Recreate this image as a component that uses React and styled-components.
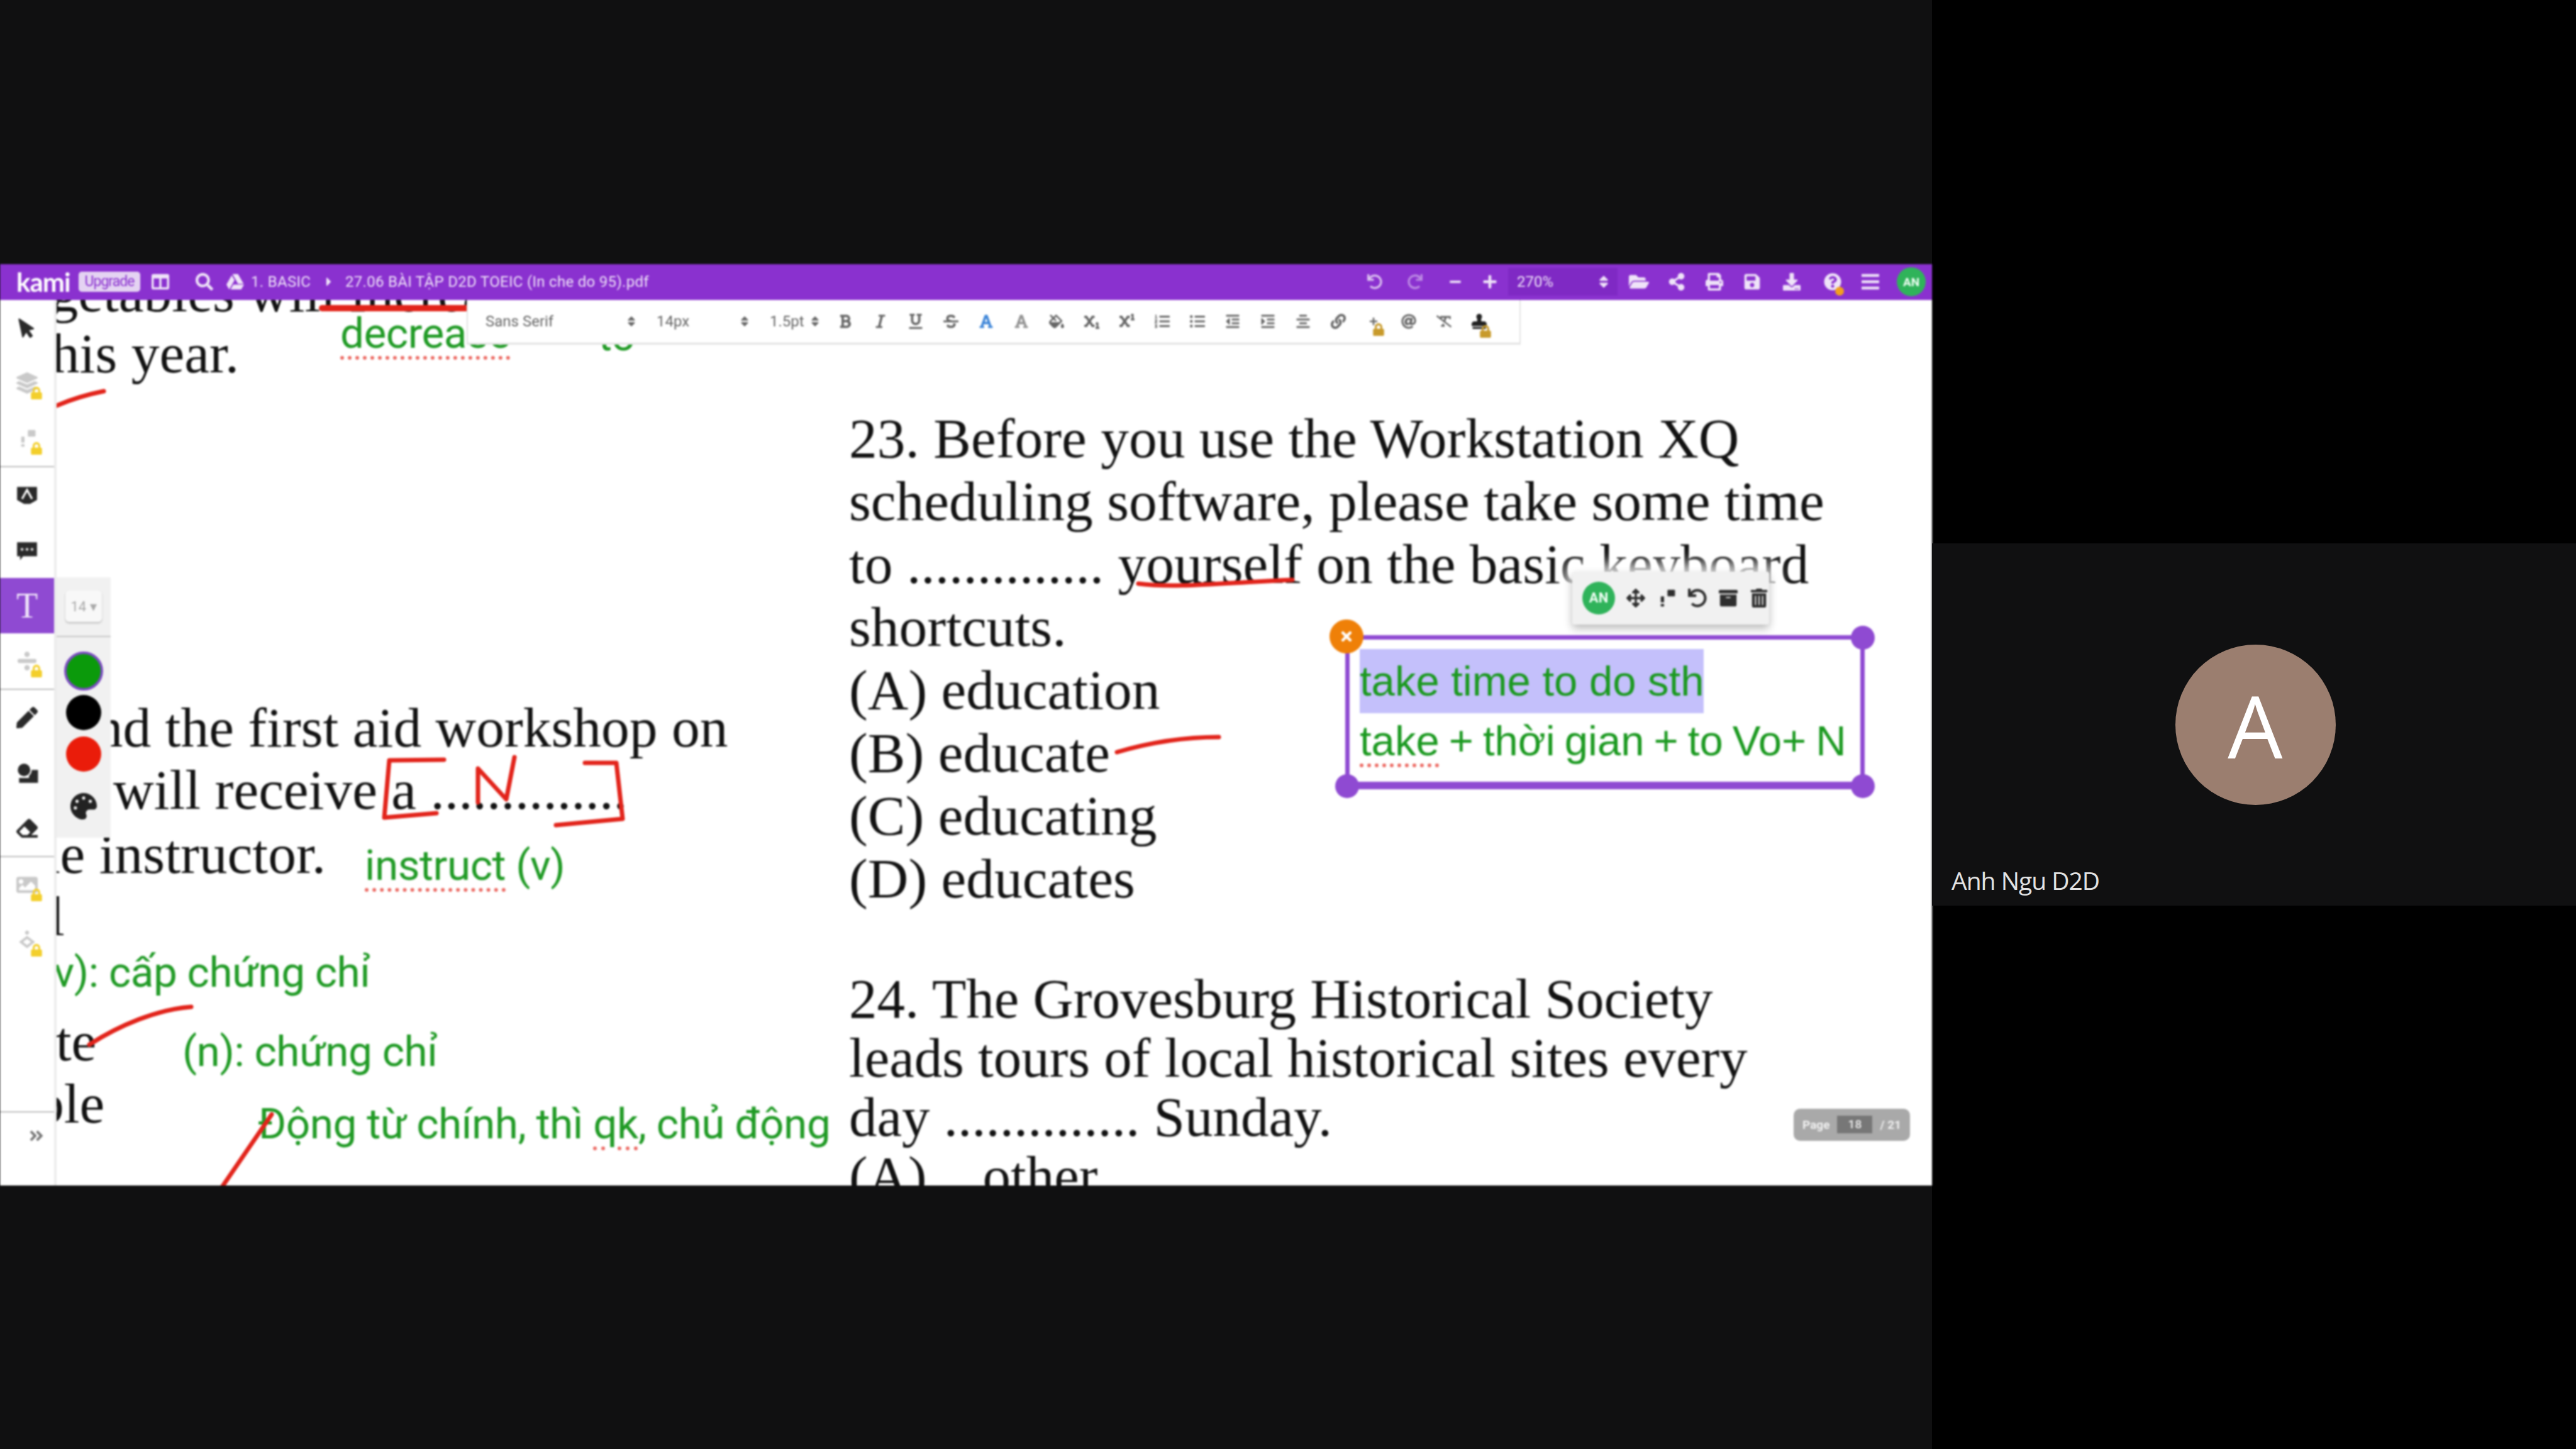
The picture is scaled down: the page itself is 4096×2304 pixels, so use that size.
import React from "react";
import styled, { createGlobalStyle } from "styled-components";
import {
  FaAlignCenter, FaAngleDoubleRight, FaArchive, FaArrowsAlt, FaAt, FaBars, FaBold, FaCaretRight,
  FaDownload, FaEraser, FaFillDrip, FaFolderOpen, FaFont,
  FaGoogleDrive, FaImage, FaIndent, FaItalic, FaLayerGroup, FaLink, FaListOl, FaListUl, FaLock, FaMousePointer,
  FaMinus, FaOutdent, FaPalette, FaPen, FaPlus, FaPrint, FaQuestionCircle, FaRedo, FaRemoveFormat, FaSave,
  FaSearch, FaShareAlt, FaSort, FaStamp, FaStrikethrough, FaSubscript, FaSuperscript,
  FaTimes, FaTrashAlt, FaUnderline, FaUndo, FaColumns, FaDivide,
} from "react-icons/fa";

const Global = createGlobalStyle`
  html, body { margin: 0; background: #000; overflow: hidden; }
`;

const Stage = styled.div`
  display: flex;
  width: 4096px;
  height: 2304px;
  background: #000;
`;

const MainColumn = styled.div`
  width: 3072px;
  display: flex;
  flex-direction: column;
  justify-content: center;
  background: #101011;
`;

const SideColumn = styled.div`
  width: 1024px;
  display: flex;
  flex-direction: column;
  justify-content: center;
`;

const Tile = styled.div`
  position: relative;
  height: 576px;
  padding-left: 4px;
  display: flex;
  align-items: center;
  justify-content: center;
  background: #101011;
`;

const BigAvatar = styled.div`
  width: 255px;
  height: 255px;
  border-radius: 50%;
  background: #9b7e6f;
  color: #fff;
  display: flex;
  align-items: center;
  justify-content: center;
  font: 400 138px "Open Sans", sans-serif;
`;

const TileName = styled.div`
  position: absolute;
  left: 31px;
  bottom: 14px;
  color: #e2e2e2;
  font: 400 39px "Open Sans", sans-serif;
  letter-spacing: -1px;
`;

const Screen = styled.div`
  height: 1465px;
  display: flex;
  flex-direction: column;
  background: #fff;
  filter: blur(1.4px);
`;

const TopBar = styled.div`
  height: 57px;
  flex: none;
  display: flex;
  align-items: center;
  padding: 0 10px 0 26px;
  background: #8a31cf;
  color: #efe4f8;
  font: 400 24px "Roboto", sans-serif;
`;

const Logo = styled.span`
  width: 99px;
  color: #fff;
  font: 700 42px "Lato", sans-serif;
  letter-spacing: -1px;
`;

const Upgrade = styled.span`
  width: 98px;
  height: 32px;
  border-radius: 5px;
  background: #e4d3f2;
  color: #8a31cf;
  font-size: 23px;
  line-height: 32px;
  text-align: center;
  letter-spacing: -1px;
`;

const BarIcon = styled.span`
  width: ${(p) => p.$w || 60}px;
  flex: none;
  display: flex;
  align-items: center;
  justify-content: center;
  position: relative;
  font-size: ${(p) => p.$size || 28}px;
  opacity: ${(p) => p.$dim || 1};
`;

const Crumb = styled.span`
  flex: none;
  width: ${(p) => p.$w}px;
  white-space: nowrap;
  letter-spacing: 0.3px;
`;

const BarSpacer = styled.div`
  flex: 1;
`;

const ZoomField = styled.span`
  width: 174px;
  height: 44px;
  margin: 0 4px;
  padding: 0 10px 0 14px;
  box-sizing: border-box;
  display: flex;
  align-items: center;
  justify-content: space-between;
  background: #7f29c4;
`;

const HelpDot = styled.i`
  position: absolute;
  right: 14px;
  bottom: -8px;
  width: 14px;
  height: 14px;
  border-radius: 50%;
  background: #f2a01e;
`;

const SmallAvatar = styled.span`
  width: ${(p) => p.$d}px;
  height: ${(p) => p.$d}px;
  flex: none;
  border-radius: 50%;
  display: flex;
  align-items: center;
  justify-content: center;
  background: #2fb35a;
  color: #f2fff6;
  font: 700 ${(p) => p.$font}px "Roboto", sans-serif;
`;

const Body = styled.div`
  flex: 1;
  display: flex;
  min-height: 0;
`;

const ToolRail = styled.div`
  width: 90px;
  flex: none;
  box-sizing: border-box;
  display: flex;
  flex-direction: column;
  background: #fff;
  border-right: 4px solid #ececec;
`;

const ToolSection = styled.div`
  display: flex;
  flex-direction: column;
  border-bottom: ${(p) => (p.$plain ? "none" : "2px solid #bdbdbd")};
`;

const ToolButton = styled.div`
  position: relative;
  height: 88px;
  display: flex;
  align-items: center;
  justify-content: center;
  background: ${(p) => (p.$active ? "#8f4ad2" : "transparent")};
  color: ${(p) => (p.$active ? "#f0e6f9" : p.$locked ? "#c9c9c9" : "#2a2a2a")};
  font-size: 34px;
`;

const ActiveGlyph = styled.span`
  font: 400 56px "Liberation Serif", serif;
`;

const RailFoot = styled.div`
  margin-top: auto;
  height: 118px;
  box-sizing: border-box;
  display: flex;
  align-items: flex-start;
  justify-content: flex-end;
  padding: 24px 15px 0 0;
  border-top: 2px solid #bdbdbd;
  color: #777;
  font-size: 26px;
`;

const LockBadge = styled.span`
  position: absolute;
  right: ${(p) => p.$r ?? 18}px;
  bottom: ${(p) => p.$b ?? 18}px;
  color: ${(p) => p.$color || "#f3cf2b"};
  font-size: ${(p) => p.$size || 20}px;
  display: flex;
`;

const ColorPanel = styled.div`
  position: absolute;
  left: 0;
  top: 441px;
  width: 86px;
  height: 414px;
  z-index: 3;
  display: flex;
  flex-direction: column;
  align-items: center;
  background: #f1f1f1;
`;

const SizeChip = styled.div`
  height: 95px;
  width: 100%;
  flex: none;
  display: flex;
  align-items: center;
  justify-content: center;
  border-bottom: 2px solid #c6c6c6;
  box-sizing: border-box;
  color: #a8a8a8;
  font: 400 22px "Roboto", sans-serif;
  & > span {
    width: 58px;
    height: 50px;
    border-radius: 6px;
    background: #f8f8f8;
    box-shadow: 0 2px 3px #bbb;
    display: flex;
    align-items: center;
    justify-content: center;
  }
`;

const Swatch = styled.div`
  width: ${(p) => (p.$selected ? 62 : 56)}px;
  height: ${(p) => (p.$selected ? 62 : 56)}px;
  box-sizing: border-box;
  margin-top: ${(p) => p.$top}px;
  border-radius: 50%;
  background: ${(p) => p.$color};
  border: ${(p) => (p.$selected ? "4px solid #7a4bc0" : "none")};
`;

const PaletteIcon = styled.div`
  margin-top: 34px;
  color: #222;
  font-size: 42px;
  display: flex;
`;

const Doc = styled.div`
  position: relative;
  flex: 1;
  overflow: hidden;
  background: #fff;
`;

const PageLine = styled.div`
  position: absolute;
  left: ${(p) => p.$x}px;
  top: ${(p) => p.$y}px;
  color: #111;
  font: 400 89.5px/100px "Liberation Serif", serif;
  white-space: pre;
`;

const Question = styled.div`
  position: absolute;
  left: ${(p) => p.$x}px;
  top: ${(p) => p.$y}px;
  color: #111;
  font: 400 ${(p) => p.$size}px/${(p) => p.$leading}px "Liberation Serif", serif;
  white-space: pre;
`;

const Note = styled.div`
  position: absolute;
  left: ${(p) => p.$x}px;
  top: ${(p) => p.$y}px;
  color: #1f9a24;
  font: 400 67.5px/84px "Roboto", sans-serif;
  white-space: pre;
  letter-spacing: -0.5px;
`;

const Misspelled = styled.span`
  text-decoration: underline dotted #ec6a63 6px;
  text-underline-offset: 14px;
`;

const Ink = styled.svg`
  position: absolute;
  left: 0;
  top: 0;
  z-index: 1;
  & path {
    fill: none;
    stroke: #e2231a;
    stroke-width: 7;
    stroke-linecap: round;
    stroke-linejoin: round;
  }
`;

const FormatBar = styled.div`
  position: absolute;
  left: 652px;
  top: 0;
  height: 71px;
  width: 1676px;
  z-index: 4;
  box-sizing: border-box;
  display: flex;
  align-items: center;
  background: #fff;
  border: solid #e2e2e2;
  border-width: 0 2px 3px 2px;
  color: #666;
  font: 400 24px "Roboto", sans-serif;
`;

const FormatSelect = styled.div`
  width: ${(p) => p.$w}px;
  flex: none;
  box-sizing: border-box;
  padding: 0 ${(p) => p.$pr}px 0 ${(p) => p.$pl}px;
  display: flex;
  align-items: center;
  justify-content: space-between;
  & svg {
    font-size: 20px;
  }
`;

const FormatButton = styled.div`
  position: relative;
  width: 56px;
  flex: none;
  display: flex;
  align-items: center;
  justify-content: center;
  color: ${(p) => p.$color || "#666"};
  font-size: ${(p) => p.$size || 24}px;
`;

const BoxTools = styled.div`
  position: absolute;
  left: 2410px;
  top: 432px;
  width: 313px;
  height: 84px;
  z-index: 2;
  display: flex;
  align-items: center;
  padding-left: 16px;
  box-sizing: border-box;
  background: #f1f1f1;
  border-radius: 4px;
  box-shadow: 0 6px 14px rgba(0, 0, 0, 0.28), 0 0 24px 12px rgba(255, 255, 255, 0.9);
  color: #2e2e2e;
  font-size: 30px;
  & > svg {
    margin-left: 17px;
    width: 32px;
  }
`;

const TextBox = styled.div`
  position: absolute;
  left: 2049px;
  top: 533px;
  width: 826px;
  height: 245px;
  z-index: 2;
  box-sizing: border-box;
  padding: 15px 0 0 16px;
  border: 7px solid #8f4ad2;
  border-bottom-width: 12px;
  color: #1a991f;
  font: 400 67px/102px "Liberation Sans", sans-serif;
  white-space: pre;
`;

const BoxLine = styled.div`
  height: ${(p) => p.$h}px;
  word-spacing: ${(p) => p.$tight || 0}px;
  & > span {
    display: inline-block;
    background: ${(p) => (p.$selected ? "#c4c0fb" : "transparent")};
  }
`;

const Handle = styled.i`
  position: absolute;
  width: 38px;
  height: 38px;
  border-radius: 50%;
  background: #8f4ad2;
  ${(p) => (p.$right ? "right: -23px;" : "left: -23px;")}
  ${(p) => (p.$bottom ? "bottom: -26px;" : "top: -22px;")}
`;

const CloseHandle = styled.div`
  position: absolute;
  left: -32px;
  top: -32px;
  width: 54px;
  height: 54px;
  border-radius: 50%;
  background: #ef8008;
  color: #fff;
  display: flex;
  align-items: center;
  justify-content: center;
  font-size: 24px;
`;

const PageBadge = styled.div`
  position: absolute;
  left: 2762px;
  top: 1286px;
  width: 185px;
  height: 51px;
  z-index: 2;
  box-sizing: border-box;
  padding: 0 14px;
  border-radius: 10px;
  background: #a9a9a9;
  color: #f1f1f1;
  display: flex;
  align-items: center;
  justify-content: space-between;
  font: 700 19px "Roboto", sans-serif;
  & > b {
    width: 56px;
    height: 28px;
    background: #777;
    font-weight: 500;
    text-align: center;
    line-height: 28px;
  }
`;

const locked = { $locked: true };

// the small icons below are not in the icon set
const AnchorIcon = () => (
  <svg width="32" height="32" viewBox="0 0 24 24" fill="currentColor">
    <rect x="13" y="2" width="9" height="8" rx="1" />
    <rect x="5" y="10" width="4" height="7" />
    <rect x="5" y="19" width="4" height="3" />
  </svg>
);

const HighlightIcon = () => (
  <svg width="38" height="38" viewBox="0 0 24 24">
    <path d="M2 4 H22 V17 L15 21 H9 L2 17 Z" fill="currentColor" />
    <path d="M7 16 L12 7 L17 16" fill="none" stroke="#fff" strokeWidth="2" />
  </svg>
);

const CommentIcon = () => (
  <svg width="40" height="38" viewBox="0 0 24 24">
    <path d="M2 4 H22 V18 H8 L5 22 V18 H2 Z" fill="currentColor" />
    <circle cx="7" cy="11" r="1.4" fill="#ddd" />
    <circle cx="12" cy="11" r="1.4" fill="#ddd" />
    <circle cx="17" cy="11" r="1.4" fill="#ddd" />
  </svg>
);

const ShapesIcon = () => (
  <svg width="38" height="38" viewBox="0 0 24 24" fill="currentColor">
    <path d="M14 9 H23 V22 H4 V17 H14 Z" />
    <circle cx="9" cy="9" r="7" stroke="#fff" strokeWidth="1.4" />
  </svg>
);

const SealIcon = () => (
  <svg width="34" height="34" viewBox="0 0 24 24" fill="currentColor">
    <circle cx="12" cy="3.5" r="2.2" />
    <path d="M12 7 L21 14 L12 21 L3 14 Z M12 10.5 L7.5 14 L12 17.5 L16.5 14 Z" fillRule="evenodd" />
  </svg>
);

function Rail() {
  return (
    <ToolRail>
      <ToolSection>
        <ToolButton><FaMousePointer style={{ transform: "rotate(-12deg)" }} /></ToolButton>
        <ToolButton {...locked}><FaLayerGroup /><LockBadge><FaLock /></LockBadge></ToolButton>
        <ToolButton {...locked}><AnchorIcon /><LockBadge><FaLock /></LockBadge></ToolButton>
      </ToolSection>
      <ToolSection $plain>
        <ToolButton><HighlightIcon /></ToolButton>
        <ToolButton><CommentIcon /></ToolButton>
        <ToolButton $active><ActiveGlyph>T</ActiveGlyph></ToolButton>
      </ToolSection>
      <ToolSection>
        <ToolButton {...locked}><FaDivide /><LockBadge><FaLock /></LockBadge></ToolButton>
      </ToolSection>
      <ToolSection>
        <ToolButton><FaPen /></ToolButton>
        <ToolButton><ShapesIcon /></ToolButton>
        <ToolButton><FaEraser /></ToolButton>
      </ToolSection>
      <ToolSection $plain>
        <ToolButton {...locked}><FaImage /><LockBadge><FaLock /></LockBadge></ToolButton>
        <ToolButton {...locked}><SealIcon /><LockBadge><FaLock /></LockBadge></ToolButton>
      </ToolSection>
      <RailFoot><FaAngleDoubleRight /></RailFoot>
    </ToolRail>
  );
}

function FormatTools() {
  const plain = [FaBold, FaItalic, FaUnderline, FaStrikethrough];
  const rest = [FaSubscript, FaSuperscript, FaListOl, FaListUl, FaOutdent, FaIndent, FaAlignCenter, FaLink];
  return (
    <FormatBar>
      <FormatSelect $w={278} $pl={28} $pr={8}>Sans Serif<FaSort /></FormatSelect>
      <FormatSelect $w={180} $pl={22} $pr={8}>14px<FaSort /></FormatSelect>
      <FormatSelect $w={114} $pl={22} $pr={10}>1.5pt<FaSort /></FormatSelect>
      {plain.map((Icon, i) => <FormatButton key={i}><Icon /></FormatButton>)}
      <FormatButton $color="#3d85d8"><FaFont /></FormatButton>
      <FormatButton><FaFont style={{ opacity: 0.7 }} /></FormatButton>
      <FormatButton><FaFillDrip /></FormatButton>
      {rest.map((Icon, i) => <FormatButton key={i}><Icon /></FormatButton>)}
      <FormatButton $size={14}><FaPlus /><LockBadge $r={10} $b={-16} $color="#c89a2b"><FaLock /></LockBadge></FormatButton>
      <FormatButton><FaAt /></FormatButton>
      <FormatButton><FaRemoveFormat /></FormatButton>
      <FormatButton $color="#222"><FaStamp /><LockBadge $r={8} $b={-14} $color="#c89a2b"><FaLock /></LockBadge></FormatButton>
    </FormatBar>
  );
}

function DocInk() {
  // page coordinates, the view box starts where the document starts
  return (
    <Ink width="2982" height="1408" viewBox="90 477 2982 1408">
      <path d="M512 490 L742 490" style={{ strokeWidth: 10 }} />
      <path d="M90 645 Q125 630 165 622" />
      <path d="M1810 928 C1870 936 1950 926 2055 922" />
      <path d="M1776 1196 C1830 1180 1880 1172 1938 1172" />
      <path d="M706 1208 L619 1209 L611 1300 L694 1293" />
      <path d="M760 1276 L760 1222 L805 1271 L818 1204" />
      <path d="M930 1213 L980 1213 L990 1302 L884 1312" />
      <path d="M142 1661 C190 1630 250 1605 304 1601" />
      <path d="M432 1772 L354 1886" />
    </Ink>
  );
}

function DocPage() {
  return (
    <Doc>
      <PageLine $x={-95} $y={-62}>vegetables will increase</PageLine>
      <PageLine $x={-33} $y={35}>this year.</PageLine>
      <PageLine $x={21} $y={630}>and the first aid workshop on</PageLine>
      <PageLine $x={90} $y={729}>will receive a ..............</PageLine>
      <PageLine $x={-64} $y={831}>the instructor.</PageLine>
      <PageLine $x={-12} $y={930}>l</PageLine>
      <PageLine $x={-41} $y={1129}>ate</PageLine>
      <PageLine $x={-33} $y={1228}>ble</PageLine>

      <Question $x={1260} $y={170} $size={89.5} $leading={100}>
        {"23. Before you use the Workstation XQ\nscheduling software, please take some time\nto .............. yourself on the basic keyboard\nshortcuts.\n(A) education\n(B) educate\n(C) educating\n(D) educates"}
      </Question>
      <Question $x={1260} $y={1064} $size={89} $leading={94}>
        {"24. The Grovesburg Historical Society\nleads tours of local historical sites every\nday .............. Sunday.\n(A)    other"}
      </Question>

      <Note $x={451} $y={11}><Misspelled>decrease</Misspelled></Note>
      <Note $x={861} $y={15}>to</Note>
      <Note $x={490} $y={857}><Misspelled>instruct</Misspelled> (v)</Note>
      <Note $x={-27} $y={1027}>(v): cấp chứng chỉ</Note>
      <Note $x={200} $y={1153}>(n): chứng chỉ</Note>
      <Note $x={320} $y={1268}>Động từ chính, thì <Misspelled>qk</Misspelled>, chủ động</Note>

      <DocInk />
      <FormatTools />

      <ColorPanel>
        <SizeChip><span>14 ▾</span></SizeChip>
        <Swatch $selected $color="#0b9a0b" $top={23} />
        <Swatch $color="#000" $top={7} />
        <Swatch $color="#ea1c0a" $top={10} />
        <PaletteIcon><FaPalette /></PaletteIcon>
      </ColorPanel>

      <BoxTools>
        <SmallAvatar $d={52} $font={22}>AN</SmallAvatar>
        <FaArrowsAlt />
        <AnchorIcon />
        <FaUndo />
        <FaArchive />
        <FaTrashAlt />
      </BoxTools>

      <TextBox>
        <BoxLine $h={95} $selected><span>take time to do sth</span></BoxLine>
        <BoxLine $h={90} $tight={-3.5}><span><Misspelled>take</Misspelled> + thời gian + to Vo+ N</span></BoxLine>
        <CloseHandle><FaTimes /></CloseHandle>
        <Handle $right />
        <Handle $bottom />
        <Handle $right $bottom />
      </TextBox>

      <PageBadge>Page<b>18</b>/ 21</PageBadge>
    </Doc>
  );
}

export default function App() {
  return (
    <Stage>
      <Global />
      <MainColumn>
        <Screen>
          <TopBar>
            <Logo>kami</Logo>
            <Upgrade>Upgrade</Upgrade>
            <BarIcon $w={64}><FaColumns /></BarIcon>
            <BarIcon $w={14} />
            <BarIcon $w={48}><FaSearch /></BarIcon>
            <BarIcon $w={50}><FaGoogleDrive /></BarIcon>
            <Crumb $w={97}>1. BASIC</Crumb>
            <BarIcon $w={53} $size={22}><FaCaretRight /></BarIcon>
            <Crumb $w={500}>27.06 BÀI TẬP D2D TOEIC (In che do 95).pdf</Crumb>
            <BarSpacer />
            <BarIcon $dim={0.8} $size={24}><FaUndo /></BarIcon>
            <BarIcon $w={68} $dim={0.5} $size={24}><FaRedo /></BarIcon>
            <BarIcon $size={20}><FaMinus /></BarIcon>
            <BarIcon $w={50} $size={24}><FaPlus /></BarIcon>
            <ZoomField>270%<FaSort /></ZoomField>
            <BarIcon $w={60} $size={32}><FaFolderOpen /></BarIcon>
            <BarIcon><FaShareAlt /></BarIcon>
            <BarIcon><FaPrint /></BarIcon>
            <BarIcon><FaSave /></BarIcon>
            <BarIcon $w={66}><FaDownload /></BarIcon>
            <BarIcon $w={64}><FaQuestionCircle /><HelpDot /></BarIcon>
            <BarIcon $w={56} $size={32}><FaBars /></BarIcon>
            <BarIcon $w={14} />
            <SmallAvatar $d={46} $font={19}>AN</SmallAvatar>
          </TopBar>
          <Body>
            <Rail />
            <DocPage />
          </Body>
        </Screen>
      </MainColumn>
      <SideColumn>
        <Tile>
          <BigAvatar>A</BigAvatar>
          <TileName>Anh Ngu D2D</TileName>
        </Tile>
      </SideColumn>
    </Stage>
  );
}
